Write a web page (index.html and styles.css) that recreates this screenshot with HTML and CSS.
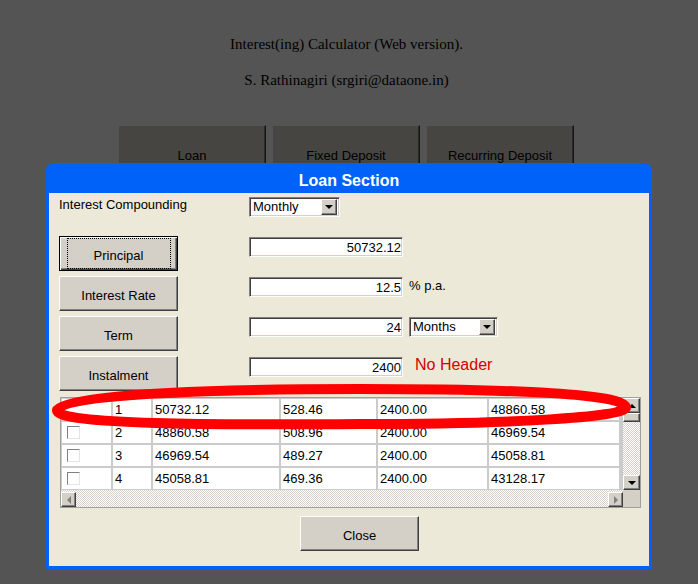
FILE: index.html
```html
<!DOCTYPE html>
<html lang="en">
<head>
<meta charset="utf-8">
<title>Interest(ing) Calculator</title>
<link rel="stylesheet" href="styles.css">
</head>
<body>
<div class="page">
  <p class="title">Interest(ing) Calculator (Web version).</p>
  <p class="author">S. Rathinagiri (srgiri@dataone.in)</p>
  <div class="tabs">
    <button class="tab">Loan</button>
    <button class="tab">Fixed Deposit</button>
    <button class="tab">Recurring Deposit</button>
  </div>
</div>
<div class="overlay"></div>
<div class="dialog">
  <div class="dialog-title">Loan Section</div>
  <div class="dialog-body">
    <div class="compounding">
      <span class="label">Interest Compounding</span>
      <div class="combo combo-monthly"><span class="combo-text">Monthly</span><span class="combo-btn"><span class="arrow-down"></span></span></div>
    </div>
    <div class="field first">
      <button class="btn btn-default">Principal</button>
      <input class="num" value="50732.12">
    </div>
    <div class="field">
      <button class="btn">Interest Rate</button>
      <input class="num" value="12.5">
      <span class="unit">% p.a.</span>
    </div>
    <div class="field">
      <button class="btn">Term</button>
      <input class="num" value="24">
      <div class="combo combo-months"><span class="combo-text">Months</span><span class="combo-btn"><span class="arrow-down"></span></span></div>
    </div>
    <div class="field">
      <button class="btn">Instalment</button>
      <input class="num" value="2400">
      <span class="note">No Header</span>
    </div>
    <div class="grid-frame">
      <div class="grid-main">
        <div class="grid">
          <div class="cell"></div><div class="cell">1</div><div class="cell">50732.12</div><div class="cell">528.46</div><div class="cell">2400.00</div><div class="cell">48860.58</div>
          <div class="cell chk-cell"><span class="chk"></span></div><div class="cell">2</div><div class="cell">48860.58</div><div class="cell">508.96</div><div class="cell">2400.00</div><div class="cell">46969.54</div>
          <div class="cell chk-cell"><span class="chk"></span></div><div class="cell">3</div><div class="cell">46969.54</div><div class="cell">489.27</div><div class="cell">2400.00</div><div class="cell">45058.81</div>
          <div class="cell chk-cell"><span class="chk"></span></div><div class="cell">4</div><div class="cell">45058.81</div><div class="cell">469.36</div><div class="cell">2400.00</div><div class="cell">43128.17</div>
        </div>
        <div class="vscroll">
          <span class="sbtn sbtn-v"><span class="arrow-up"></span></span>
          <span class="thumb-v"></span>
          <span class="track"></span>
          <span class="sbtn sbtn-v"><span class="arrow-down"></span></span>
        </div>
      </div>
      <div class="hscroll-row">
        <div class="hscroll">
          <span class="sbtn sbtn-h"><span class="arrow-left"></span></span>
          <span class="track"></span>
          <span class="sbtn sbtn-h"><span class="arrow-right"></span></span>
        </div>
        <div class="corner"></div>
      </div>
    </div>
    <div class="footer">
      <button class="btn btn-close">Close</button>
    </div>
  </div>
</div>
<svg class="annotation" width="698" height="584" viewBox="0 0 698 584" aria-hidden="true">
  <path d="M 57 410 C 60 395, 200 389, 360 389 C 520 389, 622 394, 626 407 C 628 418, 500 424, 360 424 C 220 425, 54 425, 57 410 Z" fill="none" stroke="#ff0000" stroke-width="10"/>
</svg>
</body>
</html>
```

FILE: styles.css
```css
html, body {
  margin: 0;
  padding: 0;
}

body {
  width: 698px;
  height: 584px;
  overflow: hidden;
  position: relative;
  background: #ffffff;
  font-family: "Liberation Sans", Arial, sans-serif;
  font-size: 13px;
  color: #000;
}

.page {
  padding: 35px 5px 0 0;
  text-align: center;
  font-family: "Liberation Serif", "Times New Roman", serif;
  font-size: 15px;
  color: #000;
}

.title,
.author {
  margin: 0;
  line-height: 18px;
}

.author {
  margin-top: 18px;
}

.tabs {
  display: flex;
  justify-content: center;
  gap: 6px;
  margin-top: 36px;
  padding-right: 1px;
}

.tab {
  width: 148px;
  height: 60px;
  padding: 0;
  background: #d4d0c8;
  border: 1px solid;
  border-color: #ffffff #404040 #404040 #ffffff;
  box-shadow: inset -1px -1px 0 #808080;
  font: 13px "Liberation Sans", Arial, sans-serif;
  color: #000;
}

.overlay {
  position: fixed;
  inset: 0;
  background: rgba(0, 0, 0, 0.67);
}

.dialog {
  position: absolute;
  left: 46px;
  top: 163px;
  width: 606px;
  height: 406px;
  box-sizing: border-box;
  padding: 0 3px 3px 3px;
  background: #0062f8;
  border-radius: 8px 8px 0 0;
  display: flex;
  flex-direction: column;
}

.dialog-title {
  height: 30px;
  line-height: 35px;
  text-align: center;
  color: #fff;
  font-weight: bold;
  font-size: 16px;
}

.dialog-body {
  flex: 1;
  background: #ece9d8;
  padding: 4px 0 0 10px;
}

.compounding {
  display: flex;
  align-items: flex-start;
}

.label {
  width: 190px;
  line-height: 15px;
}

.combo {
  height: 20px;
  box-sizing: border-box;
  display: flex;
  align-items: center;
  background: #fff;
  border: 1px solid;
  border-color: #808080 #ffffff #ffffff #808080;
  box-shadow: inset 1px 1px 0 #404040, inset -1px -1px 0 #d4d0c8;
  padding: 1px 2px 1px 3px;
}

.combo-monthly {
  width: 91px;
}

.combo-months {
  width: 89px;
  margin-left: 6px;
  margin-top: 1px;
}

.combo-text {
  flex: 1;
  font-size: 13px;
  line-height: 16px;
}

.combo-btn {
  width: 16px;
  height: 16px;
  box-sizing: border-box;
  background: #d4d0c8;
  border: 1px solid;
  border-color: #ffffff #404040 #404040 #ffffff;
  box-shadow: inset -1px -1px 0 #808080;
  display: flex;
  align-items: center;
  justify-content: center;
}

.arrow-down,
.arrow-up,
.arrow-left,
.arrow-right {
  width: 0;
  height: 0;
  border-style: solid;
}

.arrow-down {
  border-width: 4px 4px 0 4px;
  border-color: #000 transparent transparent transparent;
}

.arrow-up {
  border-width: 0 4px 4px 4px;
  border-color: transparent transparent #000 transparent;
}

.arrow-left {
  border-width: 4px 4px 4px 0;
  border-color: transparent #808080 transparent transparent;
}

.arrow-right {
  border-width: 4px 0 4px 4px;
  border-color: transparent transparent transparent #808080;
}

.field {
  display: flex;
  align-items: flex-start;
  height: 35px;
  margin-top: 5px;
}

.field.first {
  margin-top: 19px;
}

.btn {
  width: 119px;
  height: 35px;
  padding: 4px 0 0 0;
  box-sizing: border-box;
  background: #d4d0c8;
  border: 1px solid;
  border-color: #ffffff #404040 #404040 #ffffff;
  box-shadow: inset -1px -1px 0 #808080;
  font: 13px "Liberation Sans", Arial, sans-serif;
  color: #000;
  position: relative;
}

.btn-default {
  border-color: #000;
  box-shadow: inset 1px 1px 0 #ffffff, inset -1px -1px 0 #404040, inset -2px -2px 0 #808080;
}

.btn-default::after {
  content: "";
  position: absolute;
  left: 7px;
  right: 6px;
  top: 1px;
  bottom: 1px;
  border: 1px dotted #000;
}

.num {
  width: 154px;
  height: 20px;
  margin: 1px 0 0 71px;
  box-sizing: border-box;
  padding: 0 1px 0 2px;
  text-align: right;
  font: 13px "Liberation Sans", Arial, sans-serif;
  color: #000;
  background: #fff;
  border: 1px solid;
  border-color: #808080 #ffffff #ffffff #808080;
  box-shadow: inset 1px 1px 0 #404040, inset -1px -1px 0 #d4d0c8;
  outline: none;
}

.unit {
  margin: 1px 0 0 6px;
  line-height: 18px;
}

.note {
  margin: 0 0 0 12px;
  line-height: 17px;
  font-size: 16px;
  color: #d40000;
}

.grid-frame {
  margin: 6px 0 0 1px;
  width: 581px;
  height: 111px;
  box-sizing: border-box;
  border: 1px solid #a0a0a0;
  background: #d4d0c8;
}

.grid-main {
  display: flex;
  height: 92px;
}

.grid {
  width: 562px;
  height: 92px;
  box-sizing: border-box;
  padding: 1px 0 0 1px;
  background: #cbcbcb;
  display: grid;
  grid-template-columns: 49px 38px 126px 95px 109px 130px;
  grid-auto-rows: 21px;
  gap: 2px;
  align-content: start;
}

.cell {
  background: #fff;
  padding-left: 2px;
  line-height: 22px;
  white-space: nowrap;
  overflow: hidden;
}

.chk-cell {
  display: flex;
  align-items: center;
}

.chk {
  width: 13px;
  height: 13px;
  box-sizing: border-box;
  margin-left: 3px;
  border: 1px solid;
  border-color: #808080 #e4e4e4 #e4e4e4 #808080;
  background: #fff;
}

.vscroll {
  width: 17px;
  height: 92px;
  display: flex;
  flex-direction: column;
}

.track {
  flex: 1;
  background: repeating-conic-gradient(#ffffff 0 25%, #d4d0c8 0 50%) 0 0 / 2px 2px;
}

.sbtn {
  box-sizing: border-box;
  background: #d4d0c8;
  border: 1px solid;
  border-color: #ffffff #404040 #404040 #ffffff;
  box-shadow: inset -1px -1px 0 #808080;
  display: flex;
  align-items: center;
  justify-content: center;
}

.sbtn-v {
  width: 17px;
  height: 15px;
}

.thumb-v {
  width: 17px;
  height: 9px;
  box-sizing: border-box;
  background: #d4d0c8;
  border: 1px solid;
  border-color: #ffffff #404040 #404040 #ffffff;
  box-shadow: inset -1px -1px 0 #808080;
}

.hscroll-row {
  display: flex;
  height: 17px;
}

.hscroll {
  width: 562px;
  display: flex;
  align-items: flex-end;
  background: repeating-conic-gradient(#ffffff 0 25%, #d4d0c8 0 50%) 0 0 / 2px 2px;
}

.hscroll .track {
  align-self: stretch;
}

.sbtn-h {
  width: 15px;
  height: 15px;
}

.corner {
  width: 17px;
  background: #d4d0c8;
}

.footer {
  margin: 8px 0 0 241px;
}

.btn-close {
  width: 119px;
  height: 35px;
}

.annotation {
  position: absolute;
  left: 0;
  top: 0;
  pointer-events: none;
}
```
